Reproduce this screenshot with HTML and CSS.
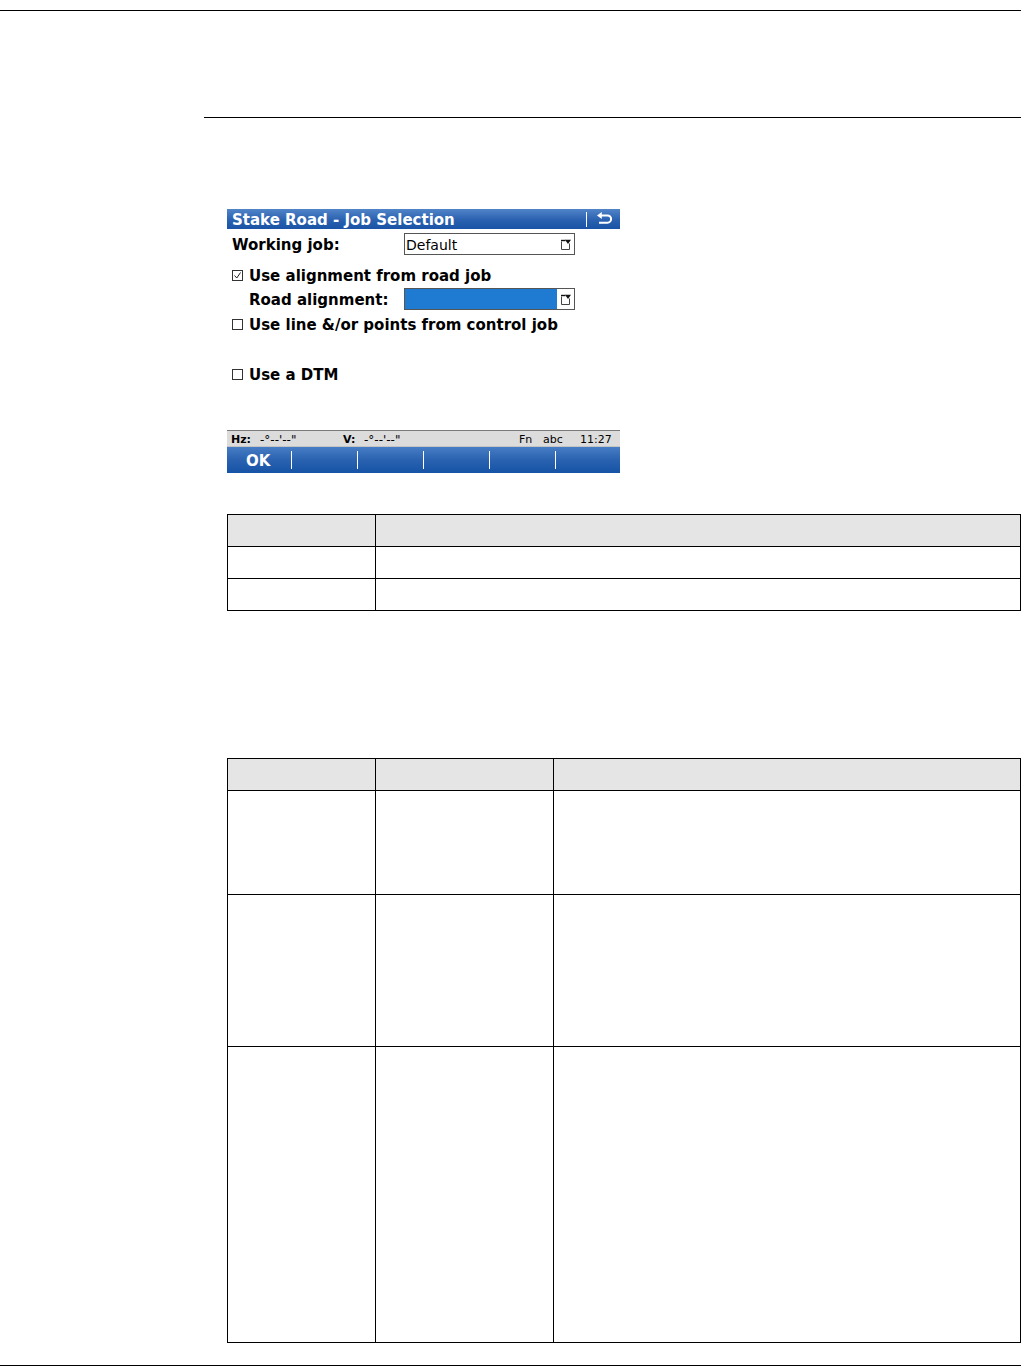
FILE: index.html
```html
<!DOCTYPE html>
<html lang="en">
<head>
<meta charset="utf-8">
<title>Stake Road - Job Selection</title>
<link rel="stylesheet" href="styles.css">
</head>
<body>
<div class="page">
  <div class="rule rule-top"></div>
  <div class="section">
    <div class="rule section-rule"></div>
    <div class="body">
      <div class="screen">
        <div class="titlebar">
          <span class="title">Stake Road - Job Selection</span>
          <span class="title-sep"></span>
          <svg class="back-icon" width="17" height="14" viewBox="0 0 17 14">
            <path d="M5 3.5 H11.5 A3.6 3.6 0 0 1 11.5 10.7 H3" fill="none" stroke="#fff" stroke-width="2"/>
            <path d="M1 3.5 L5.8 0 V7 Z" fill="#fff"/>
          </svg>
        </div>
        <div class="screen-body">
          <div class="row row-job">
            <span class="label label-job">Working job:</span>
            <div class="dropdown">
              <span class="dd-value">Default</span>
              <svg class="dd-icon" width="10" height="11" viewBox="0 0 10 11"><path d="M0.5 2.5 V10.5 H8.5 V4.5" fill="none" stroke="#444" stroke-width="1"/><path d="M0 1.5 H4.5" stroke="#111" stroke-width="1.4"/><path d="M4 0.8 H10 L7 5 Z" fill="#111"/></svg>
            </div>
          </div>
          <div class="row row-check1">
            <span class="checkbox checked"><svg width="9" height="9" viewBox="0 0 9 9"><path d="M1.5 4.5 L3.8 7 L7.5 1.5" fill="none" stroke="#222" stroke-width="1"/></svg></span>
            <span class="label">Use alignment from road job</span>
          </div>
          <div class="row row-road">
            <span class="label label-road">Road alignment:</span>
            <div class="dropdown">
              <span class="dd-fill"></span>
              <svg class="dd-icon" width="10" height="11" viewBox="0 0 10 11"><path d="M0.5 2.5 V10.5 H8.5 V4.5" fill="none" stroke="#444" stroke-width="1"/><path d="M0 1.5 H4.5" stroke="#111" stroke-width="1.4"/><path d="M4 0.8 H10 L7 5 Z" fill="#111"/></svg>
            </div>
          </div>
          <div class="row row-check2">
            <span class="checkbox"></span>
            <span class="label">Use line &amp;/or points from control job</span>
          </div>
          <div class="row row-check3">
            <span class="checkbox"></span>
            <span class="label">Use a DTM</span>
          </div>
        </div>
        <div class="statusbar">
          <span class="st st-hz"><b>Hz:</b></span>
          <span class="st st-hzv">-°--'--"</span>
          <span class="st st-v"><b>V:</b></span>
          <span class="st st-vv">-°--'--"</span>
          <span class="st st-fn">Fn</span>
          <span class="st st-abc">abc</span>
          <span class="st st-time">11:27</span>
        </div>
        <div class="softkeys">
          <div class="key"><span class="key-label">OK</span><span class="key-sep"></span></div>
          <div class="key"><span class="key-label"></span><span class="key-sep"></span></div>
          <div class="key"><span class="key-label"></span><span class="key-sep"></span></div>
          <div class="key"><span class="key-label"></span><span class="key-sep"></span></div>
          <div class="key"><span class="key-label"></span><span class="key-sep"></span></div>
          <div class="key key-last"></div>
        </div>
      </div>

      <table class="grid grid-1">
        <colgroup><col class="c1"><col></colgroup>
        <tr class="head"><td></td><td></td></tr>
        <tr class="r32"><td></td><td></td></tr>
        <tr class="r32"><td></td><td></td></tr>
      </table>

      <table class="grid grid-2">
        <colgroup><col class="c1"><col class="c2"><col></colgroup>
        <tr class="head"><td></td><td></td><td></td></tr>
        <tr class="ra"><td></td><td></td><td></td></tr>
        <tr class="rb"><td></td><td></td><td></td></tr>
        <tr class="rc"><td></td><td></td><td></td></tr>
      </table>
    </div>
  </div>
  <div class="rule rule-bottom"></div>
</div>
</body>
</html>
```

FILE: styles.css
```css
html, body {
  margin: 0;
  padding: 0;
  background: #fff;
}

.page {
  width: 1021px;
  font-family: "DejaVu Sans", Verdana, sans-serif;
  color: #000;
}

.rule {
  height: 1px;
  background: #000;
}

.rule-top {
  margin-top: 10px;
}

.section {
  margin-left: 204px;
}

.section-rule {
  margin-top: 106px;
}

.body {
  padding-left: 23px;
}

/* ---------- device screen ---------- */
.screen {
  margin-top: 91px;
  width: 393px;
  display: flex;
  flex-direction: column;
}

.titlebar {
  height: 20px;
  background: linear-gradient(#5184c8, #2a61b0 55%, #1a54a6);
  display: flex;
  align-items: center;
  color: #fff;
}

.title {
  font-weight: bold;
  font-size: 15px;
  padding-left: 5px;
  padding-top: 2px;
  flex: 1;
  line-height: 18px;
}

.title-sep {
  width: 1px;
  height: 15px;
  background: #fff;
  margin-right: 9px;
}

.back-icon {
  margin-right: 7px;
}

.screen-body {
  height: 201px;
  padding-top: 4px;
  box-sizing: border-box;
  display: flex;
  flex-direction: column;
}

.row {
  height: 22px;
  display: flex;
  align-items: center;
  font-size: 15px;
  font-weight: bold;
}

.row-check1 { margin-top: 9px; }
.row-road { margin-top: 2px; }
.row-check2 { margin-top: 3px; }
.row-check3 { margin-top: 28px; }

.label {
  white-space: nowrap;
  padding-top: 2px;
}

.label-job {
  padding-left: 5px;
  width: 172px;
}

.label-road {
  padding-left: 22px;
  width: 155px;
}

.checkbox {
  width: 11px;
  height: 11px;
  border: 1px solid #333;
  box-sizing: border-box;
  margin-left: 5px;
  margin-right: 6px;
  display: flex;
  align-items: center;
  justify-content: center;
}

.dropdown {
  width: 171px;
  height: 22px;
  box-sizing: border-box;
  border: 1px solid #555;
  display: flex;
  align-items: center;
  background: #fff;
}

.dd-value {
  font-weight: normal;
  font-size: 14px;
  padding-left: 1px;
  padding-top: 2px;
  flex: 1;
}

.dd-fill {
  align-self: stretch;
  width: 152px;
  background: #1f7bd2;
  flex: none;
}

.dd-icon {
  margin-left: auto;
  margin-right: 3px;
}

.statusbar {
  height: 17px;
  box-sizing: border-box;
  border-top: 1px solid #7a7a7a;
  border-bottom: 1px solid #c4c4c4;
  background: #dcdcdc;
  display: flex;
  align-items: center;
  font-size: 11px;
  white-space: nowrap;
}

.st { display: block; padding-top: 2px; }
.st-hz { margin-left: 4px; width: 29px; }
.st-hzv { width: 83px; font-size: 12px; }
.st-v { width: 21px; }
.st-vv { width: 155px; font-size: 12px; }
.st-fn { width: 24px; }
.st-abc { width: 37px; }

.softkeys {
  height: 26px;
  background: linear-gradient(#477dc4, #2a62b0 50%, #1553a6);
  display: flex;
}

.key {
  width: 66px;
  display: flex;
  align-items: center;
  justify-content: space-between;
}

.key-last {
  flex: 1;
}

.key-label {
  color: #fff;
  font-weight: bold;
  font-size: 15px;
  padding-left: 19px;
  padding-top: 2px;
}

.key-sep {
  width: 1px;
  height: 18px;
  background: #fff;
  margin-right: 1px;
}

/* ---------- tables ---------- */
.grid {
  border-collapse: collapse;
  width: 794px;
  table-layout: fixed;
}

.grid td {
  border: 1px solid #000;
  padding: 0;
}

.grid .head td {
  background: #e5e5e5;
  height: 31px;
}

.grid-1 {
  margin-top: 41px;
}

.grid .c1 { width: 148px; }
.grid .c2 { width: 178px; }

.grid .r32 td { height: 31px; }

.grid-2 {
  margin-top: 147px;
}

.grid .ra td { height: 103px; }
.grid .rb td { height: 151px; }
.grid .rc td { height: 295px; }

.rule-bottom {
  margin-top: 22px;
}
```
